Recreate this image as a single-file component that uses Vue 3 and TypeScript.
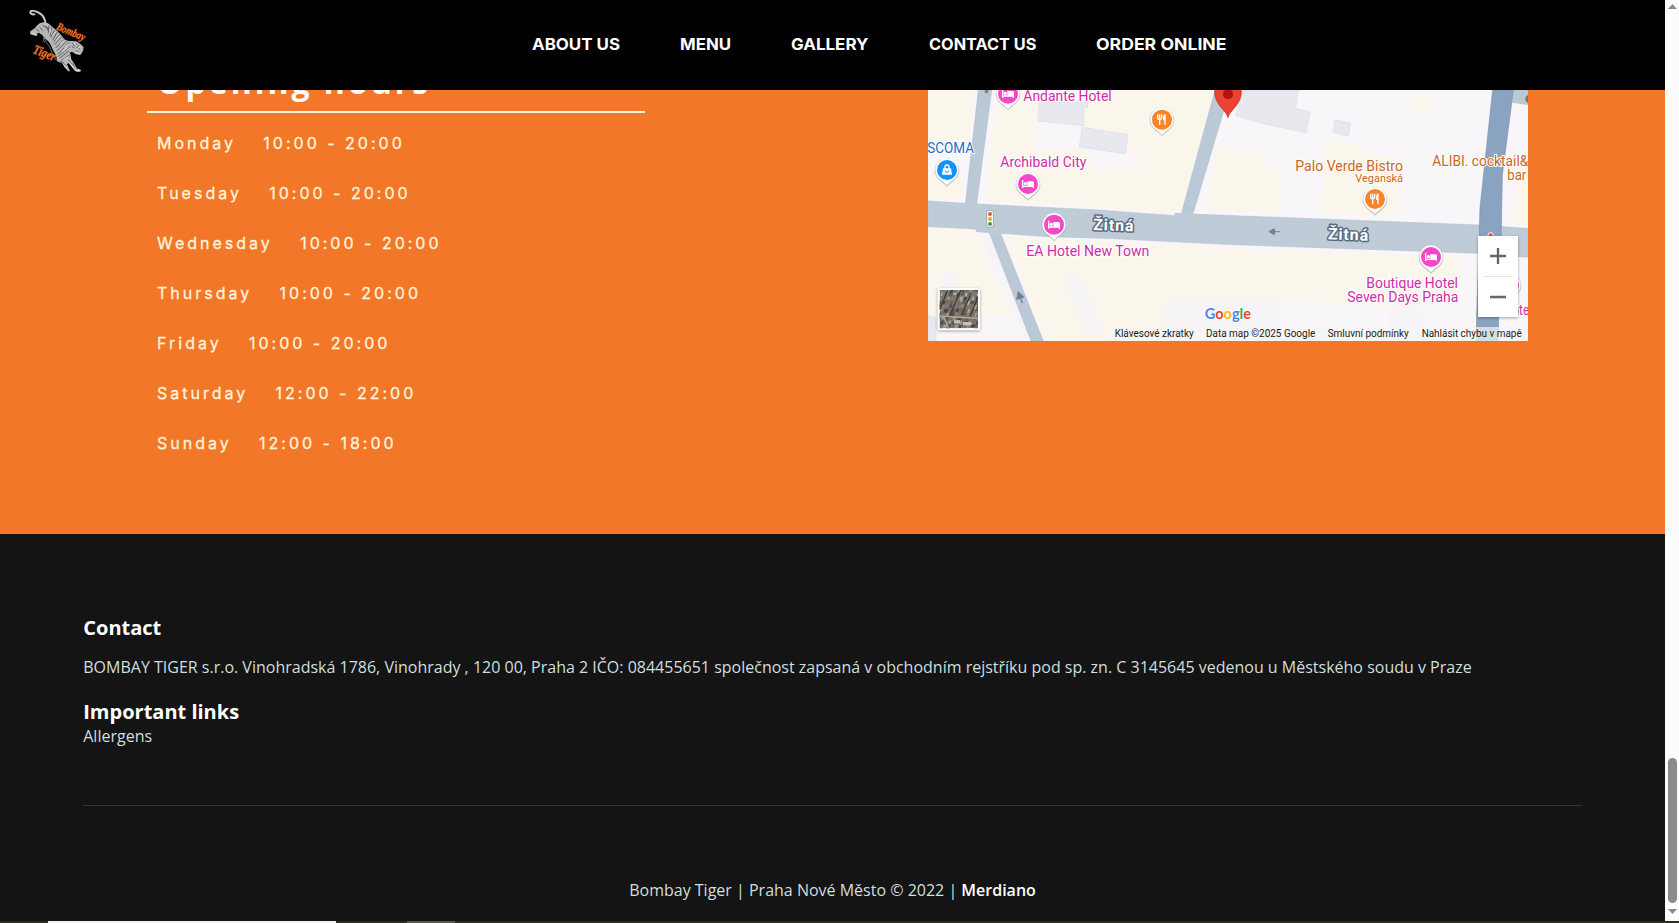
<script setup lang="ts">
interface Label { text: string; x: number; y: number; w: number; kind: string; size?: number }
interface Place { x: number; y: number; kind: 'hotel' | 'food' | 'shop' }

const links = [
  { text: 'ABOUT US', w: 88 },
  { text: 'MENU', w: 51 },
  { text: 'GALLERY', w: 77.5 },
  { text: 'CONTACT US', w: 107.5 },
  { text: 'ORDER ONLINE', w: 130.5 },
]

const hours = [
  { day: 'Monday', time: '10:00 - 20:00' },
  { day: 'Tuesday', time: '10:00 - 20:00' },
  { day: 'Wednesday', time: '10:00 - 20:00' },
  { day: 'Thursday', time: '10:00 - 20:00' },
  { day: 'Friday', time: '10:00 - 20:00' },
  { day: 'Saturday', time: '12:00 - 22:00' },
  { day: 'Sunday', time: '12:00 - 18:00' },
]

const labels: Label[] = [
  { text: 'Andante Hotel', x: 295, y: 48, w: 265, kind: 'hotel' },
  { text: 'SCOMA', x: 7, y: 204, w: 140, kind: 'shop' },
  { text: 'Archibald City', x: 226, y: 247, w: 258, kind: 'hotel' },
  { text: 'EA Hotel New Town', x: 304, y: 513, w: 369, kind: 'hotel' },
  { text: 'Palo Verde Bistro', x: 1111, y: 258, w: 323, kind: 'food' },
  { text: 'Veganská', x: 1291, y: 291, w: 143, kind: 'food', size: 34 },
  { text: 'ALIBI. cocktail&', x: 1522, y: 243, w: 288, kind: 'food' },
  { text: 'bar', x: 1747, y: 286, w: 57, kind: 'food' },
  { text: 'Boutique Hotel', x: 1324, y: 610, w: 275, kind: 'hotel' },
  { text: 'Seven Days Praha', x: 1267, y: 651, w: 333, kind: 'hotel' },
  { text: 'ote', x: 1762, y: 690, w: 51, kind: 'hotel' },
]

const places: Place[] = [
  { x: 249, y: 26, kind: 'hotel' },
  { x: 309, y: 297, kind: 'hotel' },
  { x: 387, y: 419, kind: 'hotel' },
  { x: 1518, y: 516, kind: 'hotel' },
  { x: 1752, y: 600, kind: 'hotel' },
  { x: 711, y: 104, kind: 'food' },
  { x: 1350, y: 342, kind: 'food' },
  { x: 66, y: 255, kind: 'shop' },
]

const legal = [
  { text: 'Klávesové zkratky', x: 569, w: 237 },
  { text: 'Data map ©2025 Google', x: 843, w: 328 },
  { text: 'Smluvní podmínky', x: 1208, w: 243 },
  { text: 'Nahlásit chybu v mapě', x: 1490, w: 300 },
]

const roofColors = ['#a86f62', '#55605c', '#aaa197', '#48524f', '#8d5c54', '#6b7c78', '#b5aaa0', '#3c4a44']
const roofs = Array.from({ length: 140 }, (_, i) => ({
  x: (i % 14) * 12 - 24,
  y: Math.floor(i / 14) * 12 - 4,
  w: 4 + ((i * 7) % 8),
  h: 7 + ((i * 5) % 9),
  c: roofColors[(i * 5 + Math.floor(i / 4)) % roofColors.length],
}))
</script>

<template>
  <div class="screen">
    <div class="window">
      <div class="page">
        <header class="header">
          <svg class="logo" viewBox="0 0 360 270" role="img" aria-label="Bombay Tiger">
            <path d="M137 74C136 58 128 42 112 36C102 32 92 31 91 36C90 41 96 44 103 43" fill="none" stroke="#c4c4c4" stroke-width="6" stroke-linecap="round" />
            <path d="M133 67C119 67 111 76 105 84L93 92C88 96 90 103 95 104L108 108C114 107 113 101 110 99L117 99L126 104C130 112 137 117 145 124C154 134 157 149 164 159C168 166 171 171 170 180C174 188 183 187 187 190L193 201L204 213C209 216 212 213 207 207L201 193L206 189L220 207C224 215 235 218 242 214C245 210 241 206 231 206L221 188L214 178L210 157C219 154 221 158 226 162L239 165C245 164 244 158 249 153L251 142C245 135 238 128 228 124L210 123C199 123 193 118 187 110C179 98 169 90 157 81C150 74 144 68 133 67Z" fill="#b6b6b6" />
            <g fill="none" stroke="#414141" stroke-width="2.2">
              <path d="M128 76l18 12M137 73l7 19M147 77l-2 22M155 83l-5 25M164 90l-12 23M171 96l-13 25M178 104l-17 23M184 111l-20 23M192 118l-25 26M199 124l-29 29M208 126l-34 36M211 139l-37 31M207 153l-29 22M210 164l-26 17" />
              <path d="M118 81l12 11M109 88l9 7M180 184l11 4M191 190l8 8M205 179l9 13M216 190l8 10M217 129l7 9M231 130l-7 9M238 136l-9 7M233 145l7 2M228 151l8 5M215 139l8 5" />
            </g>
            <g fill="none" stroke="#eee" stroke-width="2.4">
              <path d="M134 71l10 7M151 86l-1 13M167 95l-10 12M179 109l-11 12M193 122l-13 10M205 132l-12 11M203 143l-17 12M204 171l-14 7M207 185l13 19M189 191l13 17M222 129l7 9M240 139l-8 9M226 156l11 5M225 211l14 1M98 99l9 4" />
            </g>
            <path d="M132 108C134 124 143 132 149 140C153 151 158 166 169 181M136 109C127 115 130 124 136 128M207 158L212 170" fill="none" stroke="#9b9b9b" stroke-width="2" />
            <text class="script" x="167" y="88" font-size="34" textLength="90" lengthAdjust="spacingAndGlyphs" transform="rotate(23 167 88)">Bombay</text>
            <text class="script" x="96" y="158" font-size="40" textLength="70" lengthAdjust="spacingAndGlyphs" transform="rotate(22 96 158)">Tiger</text>
          </svg>
          <nav class="nav">
            <a v-for="link in links" :key="link.text" class="nav-link">
              <svg :width="link.w" height="20">
                <text x="0" y="16" :textLength="link.w" lengthAdjust="spacingAndGlyphs">{{ link.text }}</text>
              </svg>
            </a>
          </nav>
        </header>

        <section class="visit">
          <div class="opening">
            <h2>Opening hours</h2>
            <ul class="hours">
              <li v-for="row in hours" :key="row.day"><span class="day">{{ row.day }}</span><span>{{ row.time }}</span></li>
            </ul>
          </div>

          <svg class="map" viewBox="9 15 1800 753">
            <rect x="9" y="15" width="1800" height="753" fill="#f8f6f8" />
            <g fill="#faf6eb">
              <path d="M9 15h140l-15 152H9z" />
              <path d="M9 275h105l-5 69L9 341zM215 15h125v80l-5 28v70h130l35 15v45h140v-45H610v-52l-140-24V15h395l-90 355-24 15-231-19-337-22z" />
              <path d="M9 430l140 6 54 130 62 125H9zM243 455l687 36v277H360z" />
              <path d="M870 190l130 12 15 43h50v140l-215-10zM1190 385l10-220 110 15v30h110v170l-40 15z" />
              <path d="M900 488l700 30v130l-200 15-260-15H900z" />
              <path d="M1456 33h67v44h-67zM1785 225h24v195h-45z" />
            </g>
            <path d="M55 553l40 20 18 97H44zM412 573h52l75 170h-60zM720 647h350v121H720zM1390 665h100v60h-100zM160 440h40l145 328h-40z" fill="#f6f4f7" />
            <path d="M1183 165v220" stroke="#f8f6f8" stroke-width="8" />
            <g fill="#e8e9ee" stroke="#dcdee6" stroke-width="2">
              <path d="M343 50h145v18h-12v54l-137-14zM471 127l137 22-6 57-139-20zM9 692l24 5v71H9z" />
              <path d="M954 15h166l-8 55 43 12-12 61-119-25-92-26zM1230 105l47 9-7 40-46-13z" />
            </g>
            <g fill="#bbc8d6" stroke="#adbaca" stroke-width="1.5">
              <path d="M160 15h40l-45 344-34-3zM870 15h45L803 390h-35z" />
              <path d="M192 440l36 8 127 320h-37zM1762 15h47v44l-55-8z" />
            </g>
            <path d="M9 348l146 9 365 18 230 17v-7l150 6 760 29 149 10v87l-149-12-760-27-360-18-170-5-215-15-3-8-143-7z" fill="#c0cbd8" stroke="#adbaca" stroke-width="1.5" />
            <path d="M156 352l-34-3-1 22 34 3zM769 382h35v14h-35zM192 436l32 4 3 16-30-7z" fill="#bdcad7" />
            <path d="M1703 15h62l-33 255-3 155-10 343h-66l12-400z" fill="#89a3c0" stroke="#7894b5" stroke-width="2" />
            <path d="M181 15h7v8h-7zM1065 440h-20m-13 0l16-9v18z" fill="#718194" stroke="#718194" stroke-width="3" />
            <path d="M292 654l-8-23m-4-9l-4 20 19-6z" fill="#718194" stroke="#718194" stroke-width="4" />
            <rect x="185" y="376" width="20" height="51" rx="7" fill="#fff" stroke="#8c8c8c" stroke-width="2" />
            <circle cx="195" cy="387" r="6" fill="#df5143" /><circle cx="195" cy="402" r="6" fill="#e7aa24" /><circle cx="195" cy="417" r="6" fill="#3b9c57" />
            <circle cx="1697" cy="451" r="8" fill="#df5143" stroke="#fff" stroke-width="3" />
            <circle cx="1814" cy="42" r="13" fill="#8a6d66" />

            <text class="street" x="504" y="435" textLength="121" transform="rotate(2 504 435)">Žitná</text>
            <text class="street" x="1208" y="463" textLength="121" transform="rotate(2 1208 463)">Žitná</text>

            <g v-for="place in places" :key="`${place.x}-${place.y}`" :transform="`translate(${place.x} ${place.y})`">
              <path d="M0 50C-8 39-37 27-37 2a37 37 0 0 1 74 0C37 27 8 39 0 50z" fill="#8f9bab" opacity=".6" />
              <path d="M0 46C-8 35-35 25-35 0a35 35 0 0 1 70 0C35 25 8 35 0 46z" fill="#fff" />
              <circle r="30" :class="['dot', place.kind]" />
              <g v-if="place.kind === 'hotel'">
                <path d="M-16-12v24M-16 7h32M16 12V-5" fill="none" stroke="#fff" stroke-width="4" />
                <path d="M-2-8h15q5 0 5 6v10H-2z" fill="#fff" /><circle cx="-8" cy="-1" r="5" fill="#fff" />
              </g>
              <g v-else-if="place.kind === 'food'">
                <path d="M-13-16V-6q0 5 6 5t6-5v-10M-7-16v32M9 0v16" fill="none" stroke="#fff" stroke-width="4" />
                <path d="M11-17V2H3V-8q1-7 8-9z" fill="#fff" />
              </g>
              <g v-else>
                <path d="M-12-5h24l3 19h-30z" fill="#fff" />
                <path d="M-6-4v-5a6 6 0 0 1 12 0v5" fill="none" stroke="#fff" stroke-width="4" />
                <path d="M-5 2a5 5 0 0 0 10 0" fill="none" stroke="#1294f6" stroke-width="3" />
              </g>
            </g>

            <path d="M909 98c-4-22-40-38-40-78a40 40 0 0 1 80 0c0 40-36 56-40 78z" fill="#ea4335" stroke="#c7261e" stroke-width="2" />
            <circle cx="909" cy="28" r="15" fill="#b31412" />

            <text
              v-for="label in labels" :key="label.text" :class="['label', label.kind]" :x="label.x" :y="label.y"
              :font-size="label.size ?? 42" :textLength="label.w" lengthAdjust="spacingAndGlyphs"
            >{{ label.text }}</text>

            <rect x="560" y="726" width="1249" height="42" fill="#f5f5f5" opacity=".7" />
            <text v-for="item in legal" :key="item.text" class="legal" :x="item.x" y="756" :textLength="item.w" lengthAdjust="spacingAndGlyphs">{{ item.text }}</text>
            <text class="google" x="839" y="703" textLength="139" lengthAdjust="spacingAndGlyphs"><tspan fill="#4285f4">G</tspan><tspan fill="#ea4335">o</tspan><tspan fill="#fbbc04">o</tspan><tspan fill="#4285f4">g</tspan><tspan fill="#34a853">l</tspan><tspan fill="#ea4335">e</tspan></text>

            <rect class="raised" x="38" y="609" width="127" height="127" rx="8" fill="#fff" />
            <svg x="44" y="615" width="115" height="115" viewBox="0 0 115 115">
              <rect width="115" height="115" fill="#77756c" />
              <g transform="skewX(-17) translate(20 0)"><rect v-for="(r, i) in roofs" :key="i" :x="r.x" :y="r.y" :width="r.w" :height="r.h" :fill="r.c" /></g>
              <path d="M24 0L0 59M63 0L28 83M91 18L65 76M115 21L91 79" stroke="#4a3437" stroke-width="4" />
              <path d="M0 78l115 7M14 83l13 32" stroke="#b0a494" stroke-width="5" fill="none" />
              <path d="M43 91h18v9H43zM70 96h25v10H70z" fill="#c9c3bb" />
            </svg>
            <g>
              <rect class="raised" x="1659" y="453" width="120" height="243" fill="#fff" />
              <path d="M1674 574.500h89" stroke="#e6e6e6" stroke-width="3" />
              <path d="M1695 513h48m-24-24v48M1695 636h48" stroke="#666" stroke-width="7" />
            </g>
          </svg>
        </section>

        <footer class="footer">
          <h3>Contact</h3>
          <p class="company">BOMBAY TIGER s.r.o. Vinohradská 1786, Vinohrady , 120 00, Praha 2 IČO: 084455651 společnost zapsaná v obchodním rejstříku pod sp. zn. C 3145645 vedenou u Městského soudu v Praze</p>
          <h3>Important links</h3>
          <a class="allergens">Allergens</a>
          <hr>
          <p class="credit">Bombay Tiger | Praha Nové Město © 2022 | <strong>Merdiano</strong></p>
        </footer>
      </div>
      <div class="scrollbar">
        <svg width="9" height="5"><path d="M4.500 0L9 5H0z" fill="#8b8b8b" /></svg>
        <div class="thumb"></div>
        <svg width="9" height="5"><path d="M0 0h9L4.500 5z" fill="#8b8b8b" /></svg>
      </div>
    </div>
    <div class="taskbar"><span class="task-open"></span><span class="task-item"></span></div>
  </div>
</template>

<style>
body { margin: 0; overflow: hidden; }
</style>

<style scoped>
* { box-sizing: border-box; }
.screen { width: 1679px; height: 923px; overflow: hidden; font-family: "Open Sans", sans-serif; }
.window { display: flex; height: 921px; }
.page { width: 1665px; height: 921px; background: #141414; }
.header { display: flex; height: 90px; background: #000; }
.logo { display: block; width: 120px; height: 90px; flex: none; }
.script { font-family: "Liberation Serif", serif; font-style: italic; font-weight: 700; fill: #f37627; stroke: #f37627; stroke-width: .8px; }
.nav { display: flex; gap: 60px; margin-left: 412px; padding-top: 34px; }
.nav-link { height: 20px; }
.nav-link svg { display: block; overflow: visible; }
.nav-link text { font: 700 16px Inter, sans-serif; fill: #fff; }
.visit { display: flex; height: 444px; overflow: hidden; background: #f37728; padding-left: 147px; }
.opening { width: 498px; margin-right: 283px; }
h2 { margin: -33px 0 0; height: 56px; padding-left: 10px; border-bottom: 2px solid #fff4dc; color: #fff; font: 700 32px/50px "Open Sans", sans-serif; letter-spacing: 3px; white-space: nowrap; }
.hours { margin: 5px 0 0; padding: 0 0 0 10px; list-style: none; color: #fff4dc; font: 400 16px/50px Inter, sans-serif; letter-spacing: 3px; -webkit-text-stroke: .3px #fff4dc; }
.hours li { display: flex; height: 50px; white-space: nowrap; }
.day { margin-right: 27.3px; }
.map { display: block; width: 600px; height: 251px; overflow: hidden; font-family: Roboto, sans-serif; }
.dot.hotel { fill: #f548c8; }
.dot.food { fill: #fb8427; }
.dot.shop { fill: #1294f6; }
.label { stroke: #fff; stroke-width: 6px; stroke-linejoin: round; paint-order: stroke; }
.label.hotel { fill: #d02ca8; }
.label.food { fill: #c9661c; }
.label.shop { fill: #1a70c9; }
.street { font-size: 48px; font-weight: 700; fill: #fff; stroke: #5a6b7f; stroke-width: 9px; stroke-linejoin: round; paint-order: stroke; }
.legal { font-size: 30px; fill: #1b1b1b; }
.google { font: 700 43px Lato, sans-serif; stroke: #fff; stroke-width: 4px; paint-order: stroke; }
.raised { filter: drop-shadow(0 3px 5px rgba(0, 0, 0, .35)); }
.footer { height: 387px; padding: 80px 83.25px 0; color: #cfdfdf; font-size: 16px; }
h3 { margin: 0; height: 27px; color: #fff; font: 700 20px/27px "Open Sans", sans-serif; }
.company { margin: 14px 0 19px; height: 24px; line-height: 24px; white-space: nowrap; }
.allergens { display: block; height: 24px; line-height: 24px; margin-top: -1px; }
hr { height: 1px; margin: 57px 0 0; border: 0; background: #343434; }
.credit { margin: 72px 0 0; line-height: 24px; text-align: center; }
.credit strong { color: #fff; font-weight: 600; }
.scrollbar { display: flex; flex-direction: column; align-items: center; width: 14px; padding: 4px 0 7px 1px; background: #fcfcfc; }
.thumb { width: 9px; height: 145px; margin: auto 0 6px; border-radius: 5px; background: #8b8b8b; }
.taskbar { display: flex; height: 2px; background: #302b20; }
.task-open { width: 288px; margin-left: 48px; background: #f3f3f3; }
.task-item { width: 48px; margin-left: 71px; background: #5c5850; }
</style>
